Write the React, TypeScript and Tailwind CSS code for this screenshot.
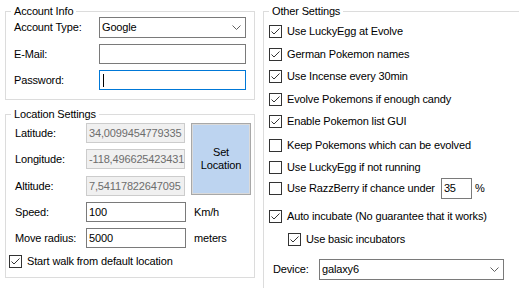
import React from "react";

function Check({ checked }: { checked?: boolean }) {
  return (
    <svg width="13" height="13" viewBox="0 0 13 13" className="shrink-0 block">
      <rect x="0.5" y="0.5" width="12" height="12" fill="white" stroke="#333333" />
      {checked && (
        <polyline points="2.5,6.5 5,9 10.5,3.5" fill="none" stroke="#333333" strokeWidth="1" />
      )}
    </svg>
  );
}

function Chevron() {
  return (
    <svg width="9" height="5" viewBox="0 0 9 5" className="shrink-0 block">
      <polyline points="0.5,0.5 4.5,4.5 8.5,0.5" fill="none" stroke="#606060" strokeWidth="1" />
    </svg>
  );
}

function Group({ title, className, children }: { title: string; className: string; children: React.ReactNode }) {
  return (
    <div className={"relative border border-[#dcdcdc] " + className}>
      <span className="absolute left-[5px] -top-[7px] px-[3px] bg-white leading-[13px] whitespace-nowrap">{title}</span>
      {children}
    </div>
  );
}

function Field({ value, w, disabled, focused }: { value: string; w: string; disabled?: boolean; focused?: boolean }) {
  const base = "h-[20px] flex items-center px-[2px] overflow-hidden whitespace-nowrap border ";
  const look = disabled
    ? "border-[#cccccc] bg-[#f0f0f0] text-[#6d6d6d]"
    : focused
    ? "border-[#0078d7] bg-white"
    : "border-[#7a7a7a] bg-white";
  return (
    <div className={base + look + " " + w}>
      {focused && <span className="block w-[1px] h-[13px] bg-black ml-[1px]" />}
      {value}
    </div>
  );
}

function CheckRow({ label, checked, className }: { label: string; checked?: boolean; className: string }) {
  return (
    <div className={"flex items-center h-[13px] gap-[5px] whitespace-nowrap " + className}>
      <Check checked={checked} />
      <span>{label}</span>
    </div>
  );
}

export default function App() {
  return (
    <div className="w-[519px] h-[288px] overflow-hidden bg-white text-black flex font-['Liberation_Sans',Arial,sans-serif] text-[11px] leading-[13px] tracking-[-0.15px]">
      <div className="flex flex-col pl-[5px] pt-[11px] w-[255px] shrink-0">
        <Group title="Account Info" className="w-[250px] h-[89px] pt-[5px] pl-[8px]">
          <div className="flex items-center h-[21px]">
            <span className="w-[85px]">Account Type:</span>
            <div className="w-[147px] h-[21px] border border-[#7a7a7a] bg-white flex items-center justify-between pl-[2px] pr-[4px]">
              <span>Google</span>
              <Chevron />
            </div>
          </div>
          <div className="flex items-center h-[20px] mt-[6px]">
            <span className="w-[85px]">E-Mail:</span>
            <Field value="" w="w-[147px]" />
          </div>
          <div className="flex items-center h-[20px] mt-[6px]">
            <span className="w-[85px]">Password:</span>
            <Field value="" w="w-[147px]" focused />
          </div>
        </Group>

        <Group title="Location Settings" className="w-[250px] h-[164px] mt-[14px] pt-[8px] pl-[9px]">
          <div className="flex">
            <div className="flex flex-col">
              <div className="flex items-center h-[20px]">
                <span className="w-[71px]">Latitude:</span>
                <Field value="34,0099454779335" w="w-[99px]" disabled />
              </div>
              <div className="flex items-center h-[20px] mt-[6px]">
                <span className="w-[71px]">Longitude:</span>
                <Field value="-118,496625423431" w="w-[99px]" disabled />
              </div>
              <div className="flex items-center h-[20px] mt-[7px]">
                <span className="w-[71px]">Altitude:</span>
                <Field value="7,54117822647095" w="w-[99px]" disabled />
              </div>
            </div>
            <div className="ml-[6px] w-[60px] h-[72px] border border-[#a8a8a8] bg-[#bdd4f0] shadow-[inset_0_0_0_1px_#dadada] flex items-center justify-center text-center">
              Set
              <br />
              Location
            </div>
          </div>
          <div className="flex items-center h-[20px] mt-[6px]">
            <span className="w-[71px]">Speed:</span>
            <Field value="100" w="w-[100px]" />
            <span className="ml-[8px]">Km/h</span>
          </div>
          <div className="flex items-center h-[20px] mt-[6px]">
            <span className="w-[71px]">Move radius:</span>
            <Field value="5000" w="w-[100px]" />
            <span className="ml-[8px]">meters</span>
          </div>
          <CheckRow label="Start walk from default location" checked className="mt-[7px] -ml-[6px]" />
        </Group>
      </div>

      <div className="pt-[11px] ml-[8px] shrink-0">
        <Group title="Other Settings" className="w-[270px] h-[300px] pl-[5px] pt-[13px]">
          <CheckRow label="Use LuckyEgg at Evolve" checked className="" />
          <CheckRow label="German Pokemon names" checked className="mt-[10px]" />
          <CheckRow label="Use Incense every 30min" checked className="mt-[9px]" />
          <CheckRow label="Evolve Pokemons if enough candy" checked className="mt-[10px]" />
          <CheckRow label="Enable Pokemon list GUI" checked className="mt-[9px]" />
          <CheckRow label="Keep Pokemons which can be evolved" className="mt-[11px]" />
          <CheckRow label="Use LuckyEgg if not running" className="mt-[9px]" />
          <div className="flex items-center h-[13px] gap-[5px] whitespace-nowrap mt-[8px]">
            <Check />
            <span>Use RazzBerry if chance under</span>
            <div className="ml-[1px] w-[31px] h-[21px] shrink-0 border border-[#7a7a7a] bg-white flex items-center px-[2px]">35</div>
            <span className="-ml-[2px]">%</span>
          </div>
          <CheckRow label="Auto incubate (No guarantee that it works)" checked className="mt-[15px]" />
          <CheckRow label="Use basic incubators" checked className="mt-[10px] ml-[19px]" />
          <div className="flex items-center h-[21px] mt-[13px] pl-[4px]">
            <span className="w-[46px]">Device:</span>
            <div className="w-[185px] h-[21px] border border-[#7a7a7a] bg-white flex items-center justify-between pl-[2px] pr-[4px]">
              <span>galaxy6</span>
              <Chevron />
            </div>
          </div>
        </Group>
      </div>
    </div>
  );
}
